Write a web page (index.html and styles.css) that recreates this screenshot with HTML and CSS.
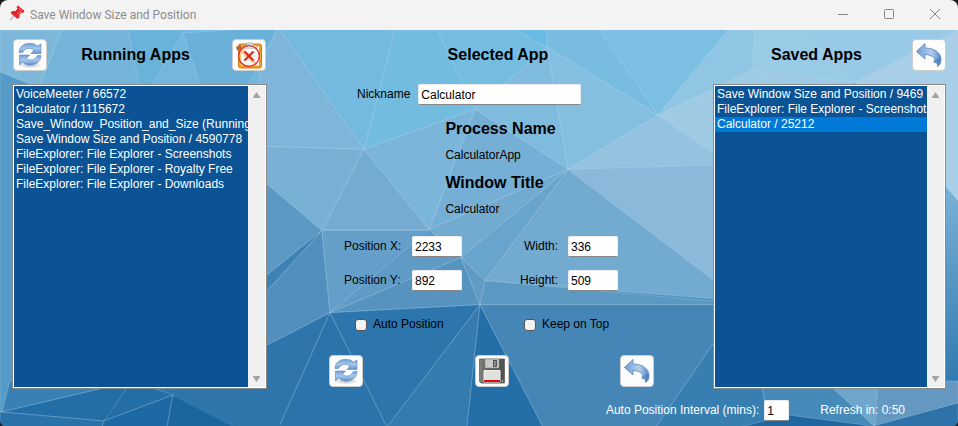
FILE: index.html
```html
<!DOCTYPE html>
<html lang="en">
<head>
<meta charset="utf-8">
<title>Save Window Size and Position</title>
<link rel="stylesheet" href="styles.css">
</head>
<body>
<svg class="defs" width="0" height="0" aria-hidden="true">
  <defs>
    <linearGradient id="blue" x1="0" y1="0" x2="0" y2="1"><stop offset="0" stop-color="#6f9dd4"/><stop offset=".5" stop-color="#a9c8ec"/><stop offset="1" stop-color="#5b8fce"/></linearGradient>
    <linearGradient id="arrow" x1="0" y1="0" x2="1" y2="0"><stop offset="0" stop-color="#6d9dd8"/><stop offset=".6" stop-color="#b4cdec"/><stop offset="1" stop-color="#5888c8"/></linearGradient>
    <linearGradient id="disk" x1="0" y1="0" x2="1" y2="0"><stop offset="0" stop-color="#818380"/><stop offset=".3" stop-color="#5d5f5b"/><stop offset="1" stop-color="#50524f"/></linearGradient>
    <radialGradient id="shade"><stop offset="0" stop-color="#777" stop-opacity=".5"/><stop offset="1" stop-color="#777" stop-opacity="0"/></radialGradient>
    <symbol id="i-refresh" viewBox="0 0 28 28">
      <ellipse cx="14" cy="24" rx="12" ry="3.500" fill="url(#shade)"/>
      <g fill="url(#blue)" stroke="#5a8ac6" stroke-width=".6" stroke-linejoin="round">
        <path d="M3 11.500C3 6 7.500 2.300 13.500 2.300C17 2.300 19.500 3.300 21.500 5L25 3V12.500H15L18 9C14.500 6.700 9 6.500 6.500 11.500Z"/>
        <path d="M25 14.500C25 20 20.500 24 14.500 24C11 24 8.500 23 6.500 21L3.500 24V14H13.500L10.500 17.500C13.500 20 19 19.500 21.500 14.500Z"/>
      </g>
    </symbol>
    <symbol id="i-undo" viewBox="0 0 28 28">
      <path d="M1.500 10.500L10 2.500V7C19 7 26 11.500 26 18.500C26 22 25 24 22.500 25.500C22.800 24 22.500 23 21.500 22L18.500 21C22 18.500 18 13.800 10 13.500V18Z" fill="url(#arrow)" stroke="#5683bb" stroke-width=".8" stroke-linejoin="round"/>
      <path d="M19 20L22.500 22V25C25 22.500 26 19 24.500 16Z" fill="#4b7dbc" opacity=".7"/>
    </symbol>
    <symbol id="i-close" viewBox="0 0 28 28">
      <rect x="3.500" y="3" width="23" height="24" rx="2" fill="#f0a020" stroke="#cf7f0c"/>
      <rect x="6" y="5.500" width="18" height="19" fill="#f8f7f4"/>
      <path d="M9 4.500H11L12 2H18L19 4.500H22V7.500H9Z" fill="#d5d5d2" stroke="#aaa" stroke-width=".7"/>
      <path d="M9 12H21M9 15H21M9 19H21" stroke="#c5c5c0"/>
      <path d="M1 6L5 4L21 22L17 21Z" fill="#f2b24a" stroke="#c17719" stroke-width=".5"/>
      <path d="M1 7L5 4L7 7L3 10Z" fill="#b0643a"/>
      <circle cx="14" cy="15" r="10.300" fill="#fff" fill-opacity=".35" stroke="#e3322c" stroke-width="1.200"/>
      <path d="M9.500 10.500L18.500 19.500M18.500 10.500L9.500 19.500" stroke="#e3221d" stroke-width="2"/>
    </symbol>
    <symbol id="i-save" viewBox="0 0 28 28">
      <ellipse cx="14" cy="26" rx="13.500" ry="1.500" fill="url(#shade)"/>
      <path d="M1.500 2H26.500V26H3L1.500 24.500Z" fill="url(#disk)" stroke="#555753" stroke-width=".7"/>
      <rect x="7" y="2" width="14" height="9" fill="#c9cbc6" stroke="#888a85" stroke-width=".6"/>
      <rect x="15.500" y="3.500" width="3" height="6" fill="#888" stroke="#444" stroke-width=".8"/>
      <path d="M6 13.500H22V25H6Z" fill="#dfe1dc" stroke="#f4f4f2"/>
      <path d="M6 23H22V25H6Z" fill="#e30909"/>
      <path d="M24 23h1v2h-1z" fill="#bbb"/>
    </symbol>
  </defs>
</svg>
<div class="window">
  <header class="titlebar">
    <svg class="pin" viewBox="0 0 16 16" aria-hidden="true">
      <path d="M6 10L1 15" stroke="#bbb" stroke-width="1.500"/>
      <path d="M9 .5L15.500 6L14 8L12 7.500L10.500 9.500V12.500L8.500 14L1.500 8L3.500 6L6.500 6L8.500 3.500L7.500 2Z" fill="#e6242b"/>
      <path d="M9.500 3L12.500 5.500L8.500 9" fill="none" stroke="#ff7d7d"/>
    </svg>
    <h1>Save Window Size and Position</h1>
    <div class="caption">
      <button type="button" aria-label="Minimize"><svg viewBox="0 0 12 12"><path d="M1 6.500H11"/></svg></button>
      <button type="button" aria-label="Maximize"><svg viewBox="0 0 12 12"><rect x="1.500" y="1.500" width="9" height="9" rx="1"/></svg></button>
      <button type="button" aria-label="Close"><svg viewBox="0 0 12 12"><path d="M1 1L11 11M11 1L1 11"/></svg></button>
    </div>
  </header>
  <div class="content">
    <svg class="mesh" viewBox="0 30 958 396" preserveAspectRatio="none" aria-hidden="true">
      <defs>
        <linearGradient id="base" x1="0" y1="0" x2="0" y2="1"><stop offset="0" stop-color="#72b9df"/><stop offset=".4" stop-color="#7ab0d5"/><stop offset=".72" stop-color="#4a8dbd"/><stop offset="1" stop-color="#216ea8"/></linearGradient>
      </defs>
      <path d="M0 30H958V426H0Z" fill="url(#base)"/>
      <g class="facets">
        <path d="M0 30H62L30 110L0 72Z" fill="#7db8da"/>
        <path d="M0 72L30 84V390L2 411H0Z" fill="#559bc8"/>
        <path d="M62 30H128L143 84L30 110Z" fill="#75b4d9"/>
        <path d="M128 30H183V33L143 100Z" fill="#69b2d9"/>
        <path d="M183 33L278 27L240 100H205Z" fill="#6ab0d9"/>
        <path d="M278 27L364 149L260 146V70Z" fill="#80b5da"/>
        <path d="M278 27L395 30L364 149Z" fill="#74bade"/>
        <path d="M395 30H437L475 109L364 149Z" fill="#72bce0"/>
        <path d="M437 30H515L547 47L475 109Z" fill="#74bde1"/>
        <path d="M515 30H547V47Z" fill="#68bbe2"/>
        <path d="M547 30H600L658 115L547 47Z" fill="#78bde0"/>
        <path d="M600 30H728L658 115Z" fill="#7bbfe3"/>
        <path d="M547 47L658 115L568 169Z" fill="#85bfdf"/>
        <path d="M547 47L568 169L475 109Z" fill="#7fbbdc"/>
        <path d="M728 30L755 30L752 70L658 115Z" fill="#91c5e4"/>
        <path d="M752 70L855 82L730 180L658 115Z" fill="#9fcae3"/>
        <path d="M755 30H800L855 82L752 70Z" fill="#99cbe7"/>
        <path d="M800 30H958L855 82Z" fill="#98c9e6"/>
        <path d="M855 82L958 30V200Z" fill="#a9cfe8"/>
        <path d="M658 115L740 170L568 169Z" fill="#94c3e1"/>
        <path d="M568 169L740 164V300Z" fill="#8bb9d9"/>
        <path d="M568 169L740 300L485 280Z" fill="#73abd0"/>
        <path d="M475 109L568 169L429 229Z" fill="#75afd5"/>
        <path d="M364 149L475 109L429 229Z" fill="#7cb5da"/>
        <path d="M364 149L429 229H322Z" fill="#75abd1"/>
        <path d="M260 146L364 149L322 230L260 178Z" fill="#7bb0d5"/>
        <path d="M260 178L322 230L260 280Z" fill="#5b98c4"/>
        <path d="M322 230L260 280V298Z" fill="#3e82b5"/>
        <path d="M322 230L330 312L260 348V298Z" fill="#528fbe"/>
        <path d="M322 230H429L330 312Z" fill="#659fc9"/>
        <path d="M429 229L461 257L330 312Z" fill="#609bc5"/>
        <path d="M461 257L480 304L330 312Z" fill="#5793bf"/>
        <path d="M429 229L568 169L461 257Z" fill="#73aad0"/>
        <path d="M568 169L485 280L461 257Z" fill="#69a4cc"/>
        <path d="M485 280L480 304L461 257Z" fill="#619ac4"/>
        <path d="M485 280L730 302V304H480Z" fill="#5b99c3"/>
        <path d="M330 312L260 348V426H279Z" fill="#2d75ab"/>
        <path d="M330 312L279 426H387Z" fill="#2b74ab"/>
        <path d="M330 312L480 304L387 426Z" fill="#2c76ad"/>
        <path d="M480 304L387 426H467Z" fill="#347bb0"/>
        <path d="M480 304L467 426H543Z" fill="#246fa8"/>
        <path d="M480 304H740L656 426H543Z" fill="#4586b6"/>
        <path d="M740 304L656 426H768L762 387V304Z" fill="#377eb1"/>
        <path d="M762 380H831L875 426H768Z" fill="#468ab9"/>
        <path d="M825 380H878L875 426Z" fill="#70a6cb"/>
        <path d="M878 380H958V402L875 426Z" fill="#6598c1"/>
        <path d="M788 414L865 424V426H740Z" fill="#20669f"/>
        <path d="M958 402V426H870Z" fill="#2d73aa"/>
        <path d="M2 411L104 387L130 380H10Z" fill="#3881b5"/>
        <path d="M2 411L104 420L132 388L104 387Z" fill="#236ea7"/>
        <path d="M104 420L173 394L132 380Z" fill="#236ea6"/>
        <path d="M0 411L104 420L102 426H0Z" fill="#2a73aa"/>
        <path d="M104 420L173 394L167 426H102Z" fill="#1d69a4"/>
        <path d="M173 394L235 426H167Z" fill="#1c66a0"/>
        <path class="plain" d="M173 394L190 380H266V347L280 340V426H235Z" fill="#2d75ab"/>
      </g>
    </svg>
    <main>
      <section class="panel">
        <div class="panel-head running">
          <button type="button" class="tool" aria-label="Refresh running apps"><svg><use href="#i-refresh"/></svg></button>
          <h2>Running Apps</h2>
          <button type="button" class="tool" aria-label="Close app"><svg><use href="#i-close"/></svg></button>
        </div>
        <div class="listbox">
          <select size="20" aria-label="Running apps">
            <option>VoiceMeeter / 66572</option>
            <option>Calculator / 1115672</option>
            <option>Save_Window_Position_and_Size (Running)</option>
            <option>Save Window Size and Position / 4590778</option>
            <option>FileExplorer: File Explorer - Screenshots</option>
            <option>FileExplorer: File Explorer - Royalty Free</option>
            <option>FileExplorer: File Explorer - Downloads</option>
          </select>
          <div class="scroll"><i class="up"></i><i class="down"></i></div>
        </div>
      </section>
      <form class="details">
        <div class="panel-head"><h2>Selected App</h2></div>
        <div class="nickname"><label for="nick">Nickname</label><input id="nick" type="text" value="Calculator"></div>
        <dl>
          <dt>Process Name</dt><dd>CalculatorApp</dd>
          <dt>Window Title</dt><dd>Calculator</dd>
        </dl>
        <div class="fields">
          <label for="px">Position X:</label><input id="px" type="text" value="2233">
          <label class="end" for="w">Width:</label><input id="w" type="text" value="336">
          <label for="py">Position Y:</label><input id="py" type="text" value="892">
          <label class="end" for="h">Height:</label><input id="h" type="text" value="509">
        </div>
        <div class="checks">
          <label><input type="checkbox">Auto Position</label>
          <label><input type="checkbox">Keep on Top</label>
        </div>
        <div class="actions">
          <button type="button" class="tool" aria-label="Refresh"><svg><use href="#i-refresh"/></svg></button>
          <button type="button" class="tool" aria-label="Save"><svg><use href="#i-save"/></svg></button>
          <button type="button" class="tool" aria-label="Restore"><svg><use href="#i-undo"/></svg></button>
        </div>
      </form>
      <section class="panel">
        <div class="panel-head saved">
          <h2>Saved Apps</h2>
          <button type="button" class="tool" aria-label="Restore all"><svg><use href="#i-undo"/></svg></button>
        </div>
        <div class="listbox">
          <select size="20" aria-label="Saved apps">
            <option>Save Window Size and Position / 9469</option>
            <option>FileExplorer: File Explorer - Screenshots</option>
            <option selected>Calculator / 25212</option>
          </select>
          <div class="scroll"><i class="up"></i><i class="down"></i></div>
        </div>
      </section>
    </main>
    <footer>
      <label for="mins">Auto Position Interval (mins):</label><input id="mins" type="text" value="1">
      <span class="timer">Refresh in: 0:50</span>
    </footer>
  </div>
</div>
</body>
</html>
```

FILE: styles.css
```css
* { box-sizing: border-box; }
body {
  margin: 0;
  background: #1b1b1f;
  color: #000;
  font: 12px/15px "Liberation Sans", Arial, sans-serif;
}
.defs { position: absolute; }
h1, h2, dl, dd { margin: 0; }
button, input, select { font: inherit; color: inherit; margin: 0; }
.window {
  display: flex;
  flex-direction: column;
  min-height: 100vh;
  border-bottom: 1px solid #33383d;
  border-radius: 8px;
  overflow: hidden;
}
.titlebar {
  display: flex;
  align-items: center;
  height: 30px;
  padding-left: 9px;
  background: #f3f3f3;
  color: #8c8c8c;
}
.pin { width: 16px; height: 16px; margin: 0 5px 4px 0; }
h1 { flex: 1; font: 12px/30px Roboto, "Open Sans", sans-serif; }
.caption { display: flex; }
.caption button {
  width: 46px;
  height: 30px;
  padding: 0 0 2px;
  border: 0;
  background: none;
}
.caption svg {
  display: block;
  width: 12px;
  height: 12px;
  margin: auto;
  fill: none;
  stroke: #858585;
}
.content {
  position: relative;
  flex: 1;
  display: flex;
  flex-direction: column;
}
.mesh { position: absolute; inset: 0; width: 100%; height: 100%; }
.facets { stroke: #c5e4f4; stroke-opacity: .35; stroke-width: .7; }
.facets .plain { stroke: none; }
main {
  position: relative;
  flex: 1;
  display: grid;
  grid-template-columns: 255px 1fr 233px;
  padding: 0 12px;
}
.panel { display: flex; flex-direction: column; }
.panel-head {
  display: flex;
  align-items: center;
  justify-content: center;
  height: 54px;
}
h2, dt { font-size: 16px; font-weight: bold; }
.panel-head h2 { flex: 1; padding-bottom: 6px; text-align: center; }
.running h2 { padding-right: 8px; }
.saved h2 { padding-left: 8px; }
.running { padding-left: 1px; padding-right: 1px; }
.tool {
  width: 34px;
  height: 32px;
  padding: 0;
  border: 1px solid #ccc;
  border-radius: 4px;
  background: #fdfdfd;
}
.panel-head .tool { margin-bottom: 4px; }
.tool svg { display: block; width: 28px; height: 28px; margin: 0 auto; }
.listbox {
  flex: 1;
  display: flex;
  border: 1px solid #8a8a8a;
  background: #f0f0f0;
  box-shadow: inset 0 0 0 1px #fff;
  padding: 1px;
}
.listbox select {
  flex: 1;
  min-width: 0;
  padding: 1px 0 0;
  border: 0;
  border-radius: 0;
  outline: 0;
  overflow: hidden;
  background: #0b5394;
  color: #fff;
}
.listbox option {
  min-height: 15px;
  padding: 0 2px;
  line-height: 15px;
  color: #fff;
}
.listbox option:checked {
  background: #0078d7 linear-gradient(#0078d7, #0078d7);
  color: #fff;
}
.scroll {
  display: flex;
  flex-direction: column;
  justify-content: space-between;
  align-items: center;
  width: 17px;
  padding: 6px 0 5px;
}
.scroll i { width: 8px; height: 6px; background: #a3a3a3; }
.up { clip-path: polygon(50% 0, 100% 100%, 0 100%); }
.down { clip-path: polygon(0 0, 100% 0, 50% 100%); }
.details .panel-head { padding-left: 16px; }
.nickname { display: flex; align-items: center; padding-left: 90px; gap: 8px; }
input[type="text"] {
  width: 50px;
  height: 21px;
  padding: 0 2px;
  border: 1px solid #ececec;
  border-bottom-color: #868686;
  border-radius: 2px;
  background: #fff;
}
.nickname input[type="text"] { width: 163px; }
dl { margin-top: 10px; padding-left: 40%; line-height: 27px; }
.fields {
  display: grid;
  grid-template-columns: 58px 50px 86px 50px;
  column-gap: 10px;
  row-gap: 13px;
  align-items: center;
  margin-top: 13px;
  padding-left: 77px;
}
.fields .end { justify-self: end; }
.checks {
  display: grid;
  grid-template-columns: 169px 1fr;
  margin-top: 26px;
  padding-left: 88px;
}
.checks label { display: flex; align-items: center; gap: 6px; }
.checks input {
  appearance: none;
  width: 12px;
  height: 12px;
  border: 1px solid #555;
  border-radius: 3px;
  background: #f3f3f3;
}
.actions {
  display: flex;
  justify-content: space-between;
  margin-top: 23px;
  padding: 0 59px 0 62px;
}
footer {
  position: relative;
  display: flex;
  align-items: center;
  justify-content: flex-end;
  height: 38px;
  padding: 7px 53px 2px 12px;
  color: #fff;
}
footer input[type="text"] { width: 25px; margin: 0 31px 0 5px; color: #000; }
```
